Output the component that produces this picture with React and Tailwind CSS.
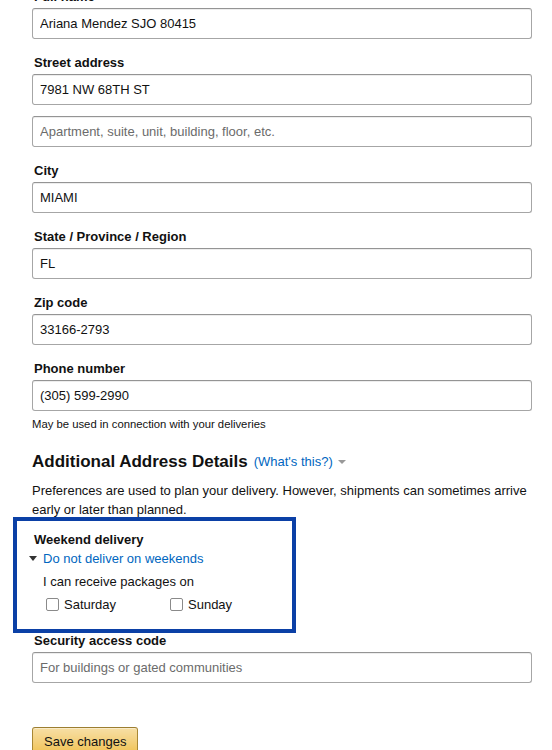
import React from 'react';

const labelCls = 'block pl-[2px] pt-[2px] mb-[2px] text-[13px] leading-[19px] font-bold text-[#111]';

const Field = ({ label, value, placeholder, className = '' }) => (
    <div className={`mb-3 ${className}`}>
        <label className={labelCls}>{label}</label>
        <TextInput value={value} placeholder={placeholder} />
    </div>
);

const TextInput = ({ value, placeholder }) => (
    <input
        type="text"
        defaultValue={value}
        placeholder={placeholder}
        className="block w-full h-[31px] px-[7px] text-[13px] text-[#111] placeholder:text-[#6b6b6b] bg-white border border-[#a6a6a6] border-t-[#949494] rounded-[3px] shadow-[inset_0_1px_0_rgba(0,0,0,0.07)] outline-none"
    />
);

const Check = ({ label }) => (
    <label className="flex items-center w-[124px] text-[13px] leading-[19px] text-[#111]">
        <span className="w-[13px] h-[13px] ml-[3px] mr-[5px] border border-[#8a8a8a] rounded-[2px] bg-white"></span>
        {label}
    </label>
);

const App = () => {
    return (
        <div className="min-h-screen bg-white overflow-hidden" style={{ fontFamily: '"Liberation Sans", Arial, sans-serif' }}>
            <div className="w-[532px] pl-8 -mt-[15px]">
                <Field label="Full name" value="Ariana Mendez SJO 80415" />

                <div className="mb-3">
                    <label className={labelCls}>Street address</label>
                    <TextInput value="7981 NW 68TH ST" />
                    <div className="mt-[11px]">
                        <TextInput placeholder="Apartment, suite, unit, building, floor, etc." />
                    </div>
                </div>

                <Field label="City" value="MIAMI" />
                <Field label="State / Province / Region" value="FL" />
                <Field label="Zip code" value="33166-2793" />

                <div>
                    <label className={labelCls}>Phone number</label>
                    <TextInput value="(305) 599-2990" />
                    <p className="mt-[6px] text-[11.3px] leading-[15px] text-[#111]">May be used in connection with your deliveries</p>
                </div>

                <div className="flex items-center gap-[6px] mt-[19px]">
                    <h4 className="text-[17px] leading-[22px] font-bold text-[#111]">Additional Address Details</h4>
                    <span className="flex items-center gap-[5px] text-[13px] text-[#0066c0]">
                        (What's this?)
                        <span className="w-0 h-0 border-x-[4px] border-x-transparent border-t-[4px] border-t-[#999]"></span>
                    </span>
                </div>

                <p className="mt-[8px] text-[13px] leading-[19px] text-[#111]">
                    Preferences are used to plan your delivery. However, shipments can sometimes arrive early or later than planned.
                </p>

                <div className="relative mt-[11px]">
                    <div className="absolute -left-[19px] -top-[13px] w-[283px] h-[116px] border-4 border-[#0b40a6]"></div>
                    <div className="pl-[2px] text-[13px] leading-[19px] font-bold text-[#111]">Weekend delivery</div>
                    <div className="flex items-center text-[13px] leading-[19px] text-[#0066c0]">
                        <span className="w-0 h-0 ml-[-3px] mr-[6px] border-x-[4px] border-x-transparent border-t-[5px] border-t-[#333]"></span>
                        Do not deliver on weekends
                    </div>
                    <div className="mt-1 pl-[11px] text-[13px] leading-[19px] text-[#111]">I can receive packages on</div>
                    <div className="flex mt-1 pl-[11px]">
                        <Check label="Saturday" />
                        <Check label="Sunday" />
                    </div>
                </div>

                <Field className="mt-[15px]" label="Security access code" placeholder="For buildings or gated communities" />

                <button className="mt-[32px] h-[29px] px-[11px] text-[13px] text-[#111] bg-gradient-to-b from-[#f7dfa5] to-[#f0c14b] border border-[#a88734] border-t-[#9c7e31] border-b-[#846a29] rounded-[3px] shadow-[inset_0_1px_0_rgba(255,255,255,0.4)]">
                    Save changes
                </button>
            </div>
        </div>
    );
};

export default App;
